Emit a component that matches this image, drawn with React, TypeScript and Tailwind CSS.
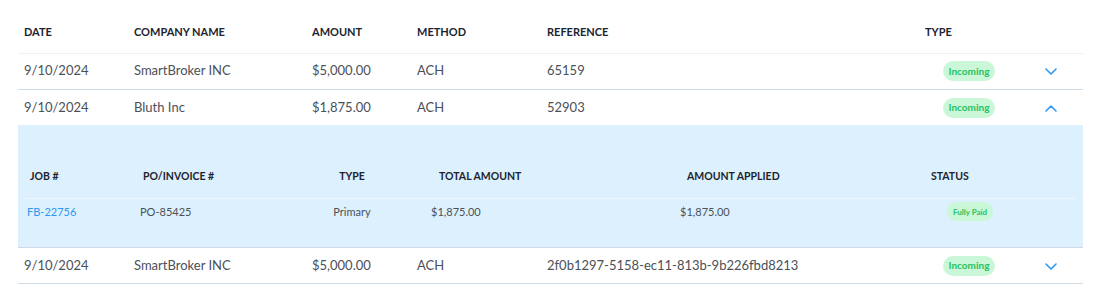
import { Fragment } from 'react';

interface Payment {
  date: string;
  company: string;
  amount: string;
  method: string;
  reference: string;
  expanded?: boolean;
}

const payments: Payment[] = [
  { date: '9/10/2024', company: 'SmartBroker INC', amount: '$5,000.00', method: 'ACH', reference: '65159' },
  { date: '9/10/2024', company: 'Bluth Inc', amount: '$1,875.00', method: 'ACH', reference: '52903', expanded: true },
  {
    date: '9/10/2024',
    company: 'SmartBroker INC',
    amount: '$5,000.00',
    method: 'ACH',
    reference: '2f0b1297-5158-ec11-813b-9b226fbd8213',
  },
];

const Chevron = ({ up }: { up?: boolean }) => (
  <svg width="12" height="7" viewBox="0 0 12 7" fill="none" className="inline-block">
    <path
      d={up ? 'M1 6 L6 1 L11 6' : 'M1 1 L6 6 L11 1'}
      stroke="#2f98ef"
      strokeWidth="1.6"
      strokeLinecap="round"
      strokeLinejoin="round"
    />
  </svg>
);

const Badge = ({ label, small }: { label: string; small?: boolean }) => (
  <span
    className={`inline-flex items-center justify-center rounded-full bg-[#caf7d8] font-bold text-[#25c262] ${
      small ? 'h-[19px] px-[6px] text-[8px]' : 'h-[20px] px-[6px] text-[10px]'
    }`}
  >
    {label}
  </span>
);

const th = 'px-[6px] text-left text-[11px] font-bold uppercase text-[#1c2430]';
const td = 'h-[36px] px-[6px] py-0 text-[13px] text-[#4b5058]';

const Allocation = () => (
  <table className="w-[1050px] table-fixed border-collapse">
    <colgroup>
      <col className="w-[113px]" />
      <col className="w-[137px]" />
      <col className="w-[154px]" />
      <col className="w-[249px]" />
      <col className="w-[248px]" />
      <col className="w-[149px]" />
    </colgroup>
    <thead>
      <tr className="h-[41px] border-b border-[#eef7fd] text-[10.5px] font-bold uppercase text-[#1c2430]">
        <th className="pl-[5px] text-left">Job #</th>
        <th className="pl-[5px] text-left">PO/Invoice #</th>
        <th className="text-center">Type</th>
        <th className="pl-[10px] text-left">Total Amount</th>
        <th className="pl-[9px] text-left">Amount Applied</th>
        <th className="pl-[5px] text-left">Status</th>
      </tr>
    </thead>
    <tbody>
      <tr className="h-[27px] text-[11px] text-[#4b5058]">
        <td className="pl-[2px] text-[#2f98ef]">FB-22756</td>
        <td className="pl-[2px]">PO-85425</td>
        <td className="text-center">Primary</td>
        <td className="pl-[2px]">$1,875.00</td>
        <td className="pl-[2px]">$1,875.00</td>
        <td className="pl-[21px]">
          <Badge label="Fully Paid" small />
        </td>
      </tr>
    </tbody>
  </table>
);

export default function App() {
  return (
    <div className="min-h-[289px] bg-white px-[18px] pt-[12px] font-['Lato',sans-serif]">
      <table className="w-[1065px] table-fixed border-collapse">
        <colgroup>
          <col className="w-[110px]" />
          <col className="w-[178px]" />
          <col className="w-[105px]" />
          <col className="w-[130px]" />
          <col className="w-[378px]" />
          <col className="w-[100px]" />
          <col className="w-[64px]" />
        </colgroup>
        <thead>
          <tr className="h-[41px] border-b border-[#f0f1f2]">
            <th className={th}>Date</th>
            <th className={th}>Company Name</th>
            <th className={th}>Amount</th>
            <th className={th}>Method</th>
            <th className={th}>Reference</th>
            <th className={th}>Type</th>
            <th />
          </tr>
        </thead>
        <tbody>
          {payments.map((p, i) => (
            <Fragment key={i}>
              <tr className={p.expanded ? '' : 'border-b border-[#d2dce5]'}>
                <td className={td}>{p.date}</td>
                <td className={td}>{p.company}</td>
                <td className={td}>{p.amount}</td>
                <td className={td}>{p.method}</td>
                <td className={td}>{p.reference}</td>
                <td className={`${td} text-center`}>
                  <Badge label="Incoming" />
                </td>
                <td className={`${td} text-center`}>
                  <Chevron up={p.expanded} />
                </td>
              </tr>
              {p.expanded && (
                <tr className="border-b border-[#cfd9e3]">
                  <td colSpan={7} className="bg-[#dcf0fd] px-[7px] pt-[32px] pb-[22px]">
                    <Allocation />
                  </td>
                </tr>
              )}
            </Fragment>
          ))}
        </tbody>
      </table>
    </div>
  );
}
